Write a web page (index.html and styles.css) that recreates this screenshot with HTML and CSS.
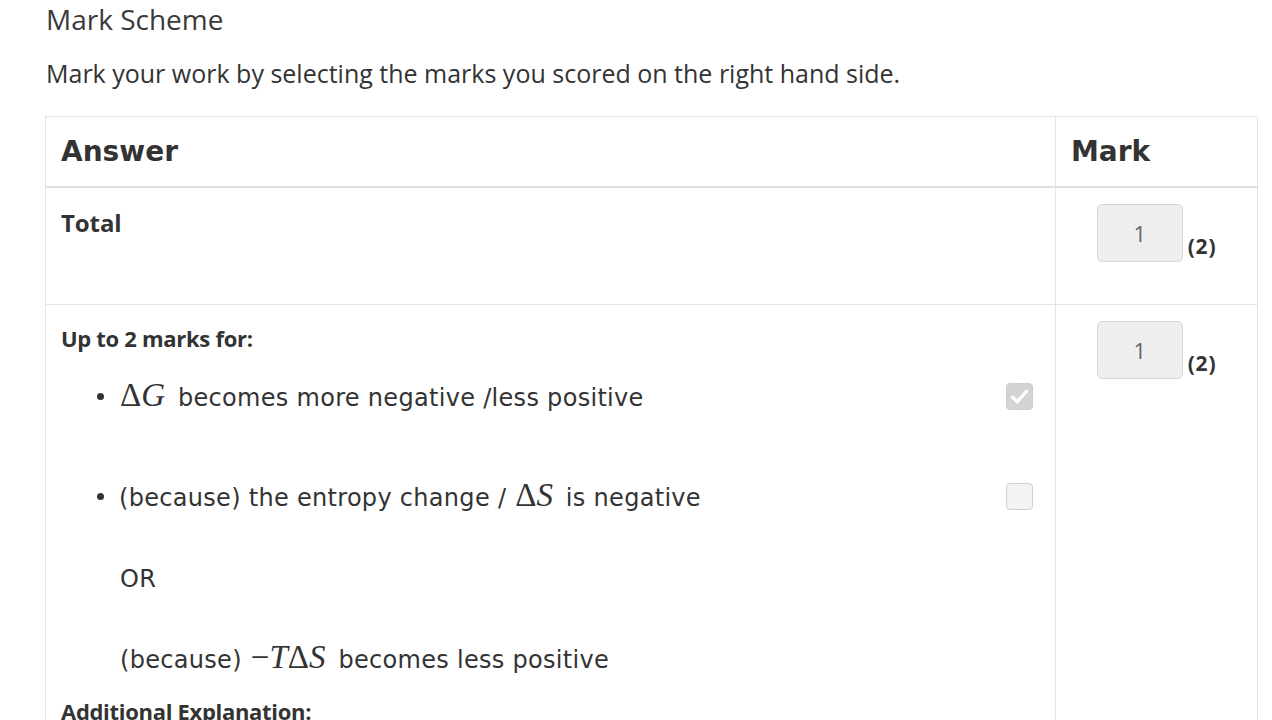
FILE: index.html
```html
<!DOCTYPE html>
<html lang="en">
<head>
<meta charset="utf-8">
<title>Mark Scheme</title>
<link rel="stylesheet" href="styles.css">
</head>
<body>
<div class="page">
  <h2 class="title">Mark Scheme</h2>
  <p class="intro">Mark your work by selecting the marks you scored on the right hand side.</p>
  <table class="scheme">
    <colgroup>
      <col class="col-answer">
      <col class="col-mark">
    </colgroup>
    <thead>
      <tr>
        <th>Answer</th>
        <th>Mark</th>
      </tr>
    </thead>
    <tbody>
      <tr class="row-total">
        <td class="answer"><div class="total-label">Total</div></td>
        <td class="mark">
          <div class="mark-wrap"><span class="mark-box">1</span><span class="out-of">(2)</span></div>
        </td>
      </tr>
      <tr class="row-detail">
        <td class="answer">
          <div class="lead">Up to 2 marks for:</div>
          <ul class="points">
            <li class="point">
              <span class="point-text"><span class="math"><span class="up">Δ</span><i>G</i></span> becomes more negative /less positive</span>
              <span class="check checked"><svg viewBox="0 0 27 27" width="27" height="27"><path d="M6.5 14.2 L11.2 18.8 L20.5 8.2" fill="none" stroke="#fff" stroke-width="3.2" stroke-linecap="round" stroke-linejoin="round"/></svg></span>
            </li>
            <li class="point">
              <span class="point-text">(because) the entropy change / <span class="math"><span class="up">Δ</span><i>S</i></span> is negative</span>
              <span class="check"></span>
            </li>
          </ul>
          <p class="alt">OR</p>
          <p class="alt alt-last">(because) <span class="math"><span class="up">−</span><i>T</i><span class="up">Δ</span><i>S</i></span> becomes less positive</p>
          <div class="lead extra">Additional Explanation:</div>
        </td>
        <td class="mark">
          <div class="mark-wrap"><span class="mark-box">1</span><span class="out-of">(2)</span></div>
        </td>
      </tr>
    </tbody>
  </table>
</div>
</body>
</html>
```

FILE: styles.css
```css
html, body {
  margin: 0;
  padding: 0;
  background: #fff;
}

body {
  color: #333;
  font-family: "Open Sans", "Noto Sans", sans-serif;
  overflow: hidden;
  height: 720px;
}

.page {
  padding: 0 0 0 45px;
}

.title {
  margin: 0;
  padding: 1px 0 0 1px;
  font-family: "Open Sans", sans-serif;
  font-weight: 400;
  font-size: 28px;
  letter-spacing: 0;
  line-height: 36px;
  color: #3a3a3a;
}

.intro {
  margin: 19px 0 0 1px;
  font-size: 25px;
  letter-spacing: 0;
  line-height: 34px;
  color: #333;
}

.scheme {
  margin-top: 26px;
  width: 1212px;
  border-collapse: collapse;
  table-layout: fixed;
}

.col-answer { width: 1010px; }
.col-mark { width: 202px; }

.scheme th,
.scheme td {
  border: 1px solid #e4e4e4;
  vertical-align: top;
  text-align: left;
}

.scheme th {
  font-family: "DejaVu Sans", sans-serif;
  font-weight: 700;
  font-size: 28px;
  height: 69px;
  padding: 0 15px;
  vertical-align: middle;
  border-bottom: 2px solid #e0e0e0;
  color: #333;
}

.scheme td {
  padding: 0 15px;
}

.row-total td {
  height: 116px;
}

.total-label {
  font-family: "Open Sans", sans-serif;
  font-weight: 700;
  font-size: 24px;
  letter-spacing: -0.1px;
  margin-top: 19px;
  line-height: 32px;
}

.mark-wrap {
  display: flex;
  align-items: flex-end;
  justify-content: center;
  margin-top: 16px;
}

.mark-box {
  width: 86px;
  height: 58px;
  box-sizing: border-box;
  display: flex;
  flex-direction: column;
  align-items: center;
  background: #eeeeee;
  border: 1px solid #d6d6d6;
  border-radius: 5px;
  font-family: "Open Sans", sans-serif;
  font-size: 22px;
  line-height: 1;
  color: #666;
  padding-top: 17px;
}

.out-of {
  font-family: "Open Sans", sans-serif;
  font-weight: 700;
  font-size: 21px;
  letter-spacing: 0.8px;
  margin-left: 5px;
  margin-bottom: 5px;
  line-height: 22px;
}

.lead {
  font-family: "Open Sans", sans-serif;
  font-weight: 700;
  font-size: 22px;
  letter-spacing: -0.3px;
  line-height: 28px;
  margin-top: 19px;
}

.points {
  list-style: none;
  margin: 0;
  padding: 0;
}

.point {
  display: flex;
  align-items: center;
  justify-content: space-between;
  position: relative;
  padding-left: 58px;
  padding-right: 7px;
  height: 34px;
  margin-top: 27px;
}

.point + .point {
  margin-top: 66px;
}

.point::before {
  content: "";
  position: absolute;
  left: 36px;
  top: 14px;
  width: 7px;
  height: 7px;
  border-radius: 50%;
  background: #333;
}

.point-text,
.alt {
  font-family: "DejaVu Sans", Verdana, sans-serif;
  font-size: 24px;
  letter-spacing: 0.3px;
  color: #333;
}

.math {
  font-family: "Liberation Serif", "Times New Roman", serif;
  font-size: 33px;
  letter-spacing: 0;
  color: #333;
  margin: 0 5px 0 1px;
  line-height: 30px;
}

.math i {
  font-style: italic;
}

.math .up {
  font-style: normal;
}

.check {
  width: 27px;
  height: 27px;
  box-sizing: border-box;
  border: 1px solid #d0d0d0;
  border-radius: 4px;
  background: #f3f3f3;
  display: flex;
  align-items: center;
  justify-content: center;
  overflow: hidden;
}

.check svg {
  display: block;
  flex: none;
}

.check.checked {
  background: #d4d4d4;
  border-color: #cdcdcd;
}

.alt {
  margin: 0;
  padding-left: 59px;
  line-height: 34px;
}

.points + .alt {
  margin-top: 49px;
}

.alt-last {
  margin-top: 46px;
}

.extra {
  margin-top: 20px;
}
```
